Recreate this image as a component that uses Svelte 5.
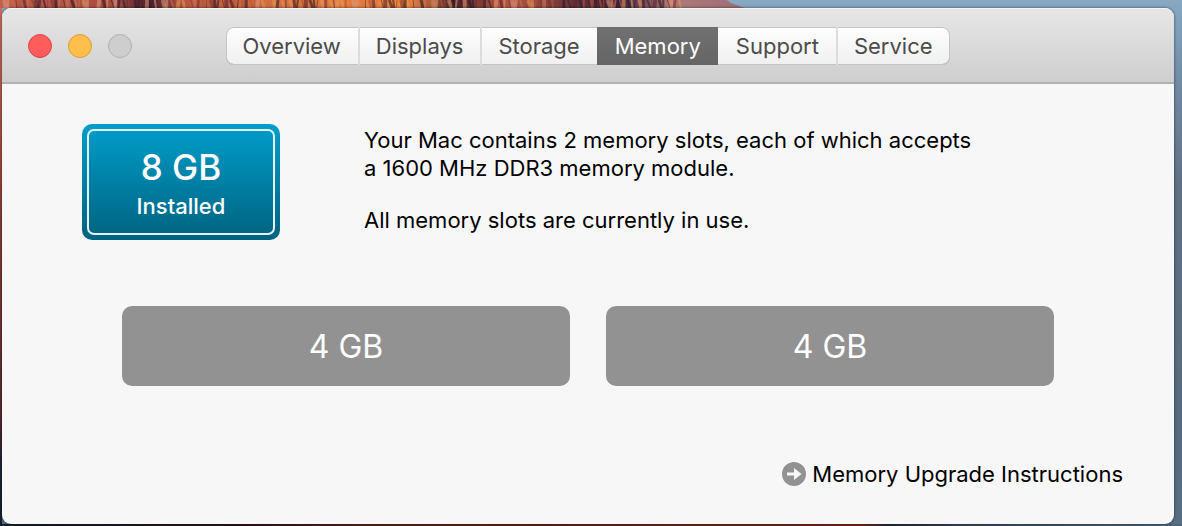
<script>
  const tabs = ['Overview', 'Displays', 'Storage', 'Memory', 'Support', 'Service'];
  const slots = ['4 GB', '4 GB'];
  const lights = ['Close', 'Minimize', 'Zoom'];
  let active = $state('Memory');

  // Rock strands of the desktop wallpaper: a fixed pseudo-random spread.
  const colors = ['#d0705a', '#5a2430', '#e8935e', '#3a1c2c', '#b8503c', '#7c3436', '#dd9478', '#2c1826'];
  const strands = Array.from({ length: 172 }, (_, i) => ({
    x: i * 4,
    w: 1 + ((i * 7) % 4),
    lean: ((i * 13) % 5) - 1,
    color: colors[(i * 5 + ((i * i) % 11)) % colors.length]
  }));
</script>

<div class="desktop">
  <svg class="rocks" viewBox="0 0 750 8" preserveAspectRatio="none" aria-hidden="true">
    <defs>
      <linearGradient id="rock" x1="0" x2="1">
        <stop offset="0" stop-color="#c0604c" />
        <stop offset=".16" stop-color="#a04a40" />
        <stop offset=".2" stop-color="#3c1c2c" />
        <stop offset=".25" stop-color="#b9583f" />
        <stop offset=".4" stop-color="#d8743c" />
        <stop offset=".55" stop-color="#f08a3c" />
        <stop offset=".61" stop-color="#4a202c" />
        <stop offset=".67" stop-color="#b9583f" />
        <stop offset=".83" stop-color="#3c2238" />
        <stop offset=".9" stop-color="#b07a78" />
        <stop offset="1" stop-color="#9a6f78" />
      </linearGradient>
    </defs>
    <path d="M0 0H732L736 3L742 5L750 8H0Z" fill="url(#rock)" />
    {#each strands as s}
      <path d="M{s.x} 0L{s.x + s.lean} 8" stroke={s.color} stroke-width={s.w} opacity=".6" />
    {/each}
  </svg>

  <main class="window">
    <header>
      <div class="lights">
        {#each lights as name}
          <button class="light {name.toLowerCase()}" aria-label={name}></button>
        {/each}
      </div>
      <nav>
        {#each tabs as tab}
          <button class:active={active === tab} onclick={() => (active = tab)}>{tab}</button>
        {/each}
      </nav>
    </header>

    <section class="summary">
      <div class="badge">
        <div class="inner">
          <strong>8 GB</strong>
          <span>Installed</span>
        </div>
      </div>
      <div class="info">
        <p>Your Mac contains 2 memory slots, each of which accepts<br />a 1600 MHz DDR3 memory module.</p>
        <p>All memory slots are currently in use.</p>
      </div>
    </section>

    <section class="slots">
      {#each slots as size}
        <div class="slot">{size}</div>
      {/each}
    </section>

    <footer>
      <a href="#upgrade">
        <svg width="24" height="24" viewBox="0 0 24 24" aria-hidden="true">
          <circle cx="12" cy="12" r="12" fill="#929292" />
          <path d="M5 10.5H12V6L19.5 12L12 18V13.5H5Z" fill="#f7f7f7" />
        </svg>
        Memory Upgrade Instructions
      </a>
    </footer>
  </main>
</div>

<style>
  :global(body) {
    margin: 0;
  }

  .desktop {
    position: relative;
    box-sizing: border-box;
    min-height: 100vh;
    display: flex;
    padding: 8px 8px 2px 2px;
    font-family: Inter, Roboto, sans-serif;
    background:
      linear-gradient(90deg, #14202a, #29141c 20%, #5a1f1c 30%, #6a2820 60%, #742820 73%, #252b3b 75%, #344554 81%, #4f6678) bottom / 100% 2px no-repeat,
      linear-gradient(#d0705a, #8b3e38 40%, #5a2630 80%, #1b2838 88%, #13202c) left / 2px 100% no-repeat,
      linear-gradient(#87a9c3, #718ba3 16%, #607184 35%, #566b7d 80%, #586f82);
  }

  .rocks {
    position: absolute;
    top: 0;
    left: 0;
    width: 63%;
    height: 8px;
  }

  .window {
    position: relative;
    flex: 1;
    display: flex;
    flex-direction: column;
    overflow: hidden;
    border-radius: 9px;
    background: #f7f7f7;
    box-shadow: 0 0 3px rgba(0, 0, 0, 0.6);
  }

  header {
    box-sizing: border-box;
    display: grid;
    grid-template-columns: 1fr auto 1fr;
    align-items: center;
    height: 76px;
    padding: 2px 26px 0;
    border-bottom: 2px solid #b2b2b2;
    background: linear-gradient(#e7e7e7, #cecece);
    box-shadow: inset 0 1px #f4f4f4;
  }

  .lights {
    display: flex;
    gap: 16px;
  }

  .light {
    width: 24px;
    height: 24px;
    padding: 0;
    border: 1px solid #b1b1b1;
    border-radius: 50%;
    background: #cecece;
  }

  .light.close {
    border-color: #e2444a;
    background: #ff5c5c;
  }

  .light.minimize {
    border-color: #e09c3a;
    background: #ffbf4a;
  }

  nav {
    display: flex;
    height: 38px;
    border-radius: 8px;
    background: linear-gradient(#fefefe, #f0f0f0);
    box-shadow: inset 0 0 0 1px #c4c4c4, inset 0 -1px #a0a0a0;
  }

  nav button {
    padding: 0 17px 0 16px;
    border: 0;
    border-left: 2px solid #dcdcdc;
    background: none;
    color: #4b4b4b;
    font: 400 22px/38px Inter, Roboto, sans-serif;
  }

  nav button:first-child {
    padding-left: 14px;
  }

  nav button:first-child,
  nav button.active,
  nav button.active + button {
    border-left-color: transparent;
  }

  nav button.active {
    background: linear-gradient(#707070, #656565);
    color: #fff;
  }

  .summary {
    display: flex;
    gap: 84px;
    padding: 40px 80px 0;
  }

  .badge {
    box-sizing: border-box;
    width: 198px;
    height: 116px;
    padding: 5px;
    border-radius: 10px;
    background: linear-gradient(#009ecb, #00627f);
  }

  .inner {
    box-sizing: border-box;
    display: flex;
    flex-direction: column;
    align-items: center;
    height: 100%;
    padding-top: 16px;
    border: 2px solid #e4f2f6;
    border-radius: 7px;
    color: #fff;
  }

  strong {
    font-size: 35px;
    font-weight: 500;
    line-height: 40px;
  }

  .inner span {
    font-size: 22px;
    font-weight: 500;
    line-height: 38px;
  }

  .info {
    padding-top: 2px;
    font-size: 22px;
    line-height: 28px;
    color: #000;
  }

  p {
    margin: 0;
  }

  p + p {
    margin-top: 24px;
  }

  .slots {
    display: grid;
    grid-template-columns: 1fr 1fr;
    gap: 36px;
    padding: 66px 120px 0;
  }

  .slot {
    box-sizing: border-box;
    height: 80px;
    border-radius: 10px;
    background: #929292;
    color: #fff;
    font-size: 32px;
    line-height: 82px;
    text-align: center;
  }

  footer {
    display: flex;
    justify-content: flex-end;
    margin-top: auto;
    padding: 0 51px 36px;
  }

  a {
    display: flex;
    align-items: center;
    gap: 6px;
    color: #000;
    font-size: 22px;
    line-height: 28px;
    text-decoration: none;
  }
</style>
